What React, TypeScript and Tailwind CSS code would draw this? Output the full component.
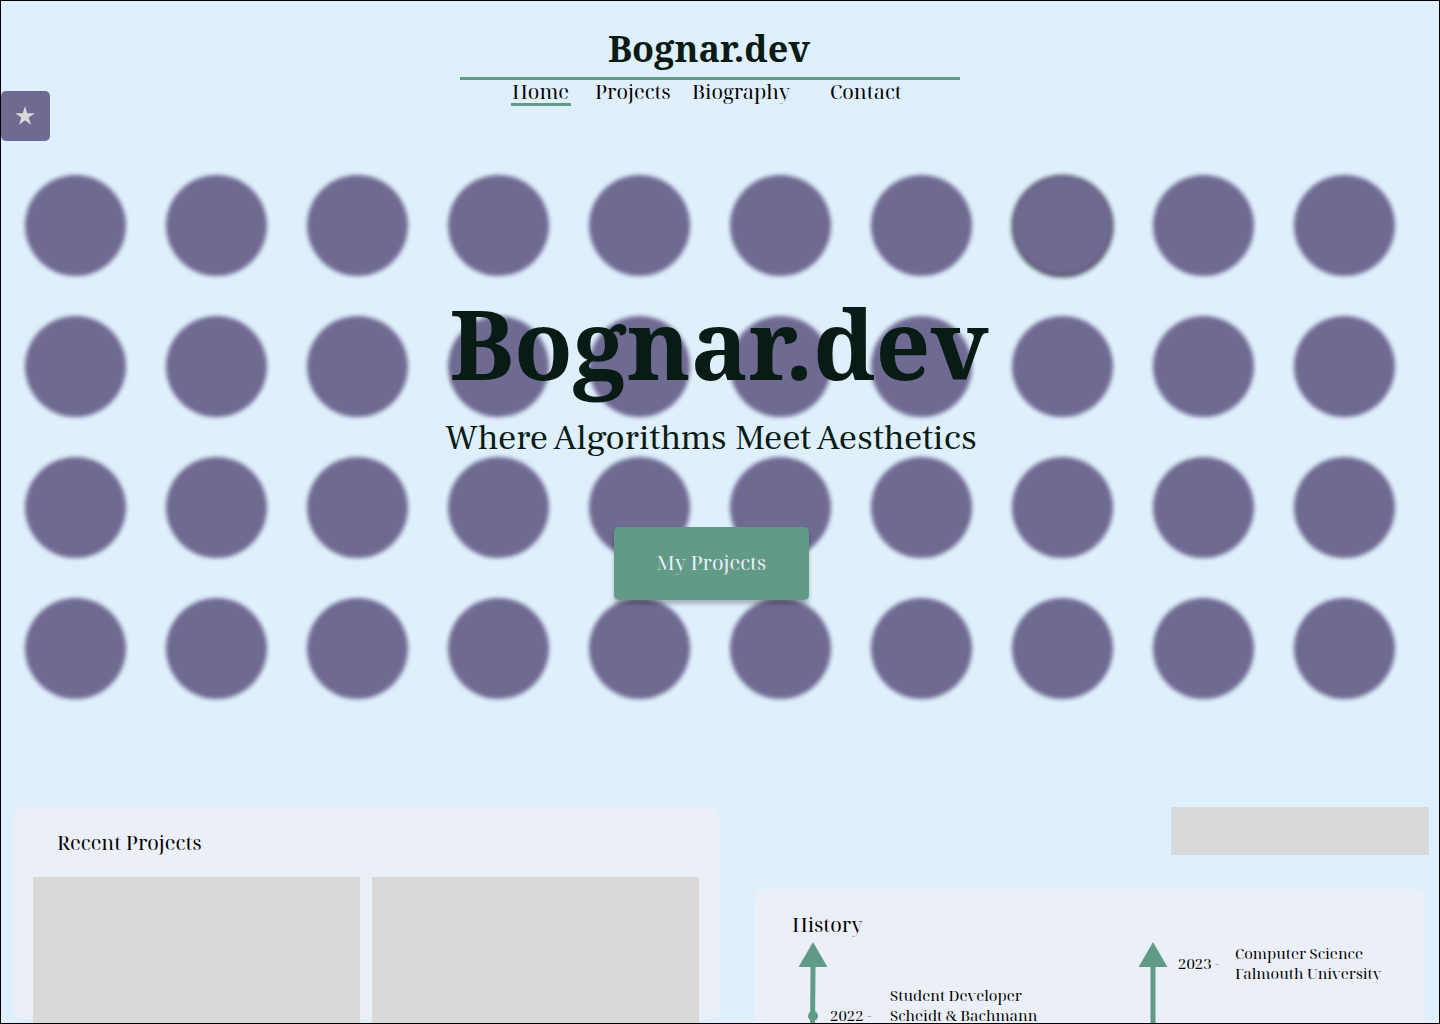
import React from "react";

const circles = Array.from({ length: 40 }, (_, i) => i);
const RAISED_CIRCLE = 7;

function StarTab() {
  return (
    <button
      type="button"
      aria-label="Favourites"
      className="absolute left-0 top-[90px] flex h-[50px] w-[49px] items-center justify-center rounded-[5px] bg-[#6f6a91] pb-px pr-px"
    >
      <svg width="20" height="19" viewBox="0 0 19 18" aria-hidden="true">
        <path
          d="M9.5 0 L11.6 6.8 H18.8 L13 11 L15.2 17.8 L9.5 13.6 L3.8 17.8 L6 11 L0.2 6.8 H7.4 Z"
          fill="#d9d9d9"
        />
      </svg>
    </button>
  );
}

function Header() {
  return (
    <header className="flex flex-col items-center pr-5 pt-6">
      <div className="w-[500px] max-w-full">
        <div className="border-b-[3px] border-[#619b87] pb-1 pr-[2px] text-center font-['Noto_Serif',serif] text-[36px] font-bold leading-[48px] text-[#081c15]">
          Bognar.dev
        </div>
        <nav className="grid grid-cols-[84px_97px_138px_auto] pl-[51px] text-[20px] leading-[23px] text-black">
          <a href="#home" className="w-[60px] border-b-[3px] border-[#619b87] pl-px">
            Home
          </a>
          <a href="#projects">Projects</a>
          <a href="#biography">Biography</a>
          <a href="#contact">Contact</a>
        </nav>
      </div>
    </header>
  );
}

function Hero() {
  return (
    <section id="home" className="mt-[69px] grid">
      <div className="col-start-1 row-start-1 grid grid-cols-10 justify-items-center gap-y-10 pl-1 pr-6">
        {circles.map((i) => (
          <div
            key={i}
            className={
              i === RAISED_CIRCLE
                ? "size-[101px] rounded-full bg-[#6f6a91] shadow-[inset_0_0_1px_1px_rgba(0,0,0,0.6),0_1px_2px_rgba(0,0,0,0.8)] blur-[2px]"
                : "size-[101px] rounded-full bg-[#6f6a91] blur-[2px]"
            }
          />
        ))}
      </div>
      <div className="z-10 col-start-1 row-start-1 flex flex-col items-center pt-[108px] text-[#081c15]">
        <h1 className="pr-[2px] font-['Noto_Serif',serif] text-[96px] font-bold leading-[120px]">Bognar.dev</h1>
        <p className="mt-3 pr-[18px] font-['Frank_Ruhl_Libre',serif] text-[36px] leading-[46px]">
          Where Algorithms Meet Aesthetics
        </p>
        <div className="mt-[66px] pr-[18px]">
          <button
            type="button"
            className="h-[73px] w-[195px] rounded-[5px] bg-[#619b87] pb-[2px] text-[20px] text-[#ebeff8] shadow-[0_4px_4px_rgba(0,0,0,0.25)]"
          >
            My Projects
          </button>
        </div>
      </div>
    </section>
  );
}

function Arrow({ dot }: { dot?: boolean }) {
  return (
    <svg width="28" height="160" viewBox="0 0 28 160" className="shrink-0 overflow-visible" aria-hidden="true">
      <path d="M14 0 L28.4 25 H-0.4 Z" fill="#619b87" />
      <path d={dot ? "M11.5 24 H16.5 L15.5 160 H10.5 Z" : "M11.5 24 H16.5 V160 H11.5 Z"} fill="#619b87" />
      {dot && <circle cx="14" cy="74" r="5" fill="#619b87" />}
    </svg>
  );
}

function RecentProjects() {
  return (
    <section id="projects" className="h-[212px] rounded-[10px] bg-[#ebeff8] pl-5 pr-[21px] pt-[22px]">
      <h2 className="pl-6 text-[20px] leading-[28px]">Recent Projects</h2>
      <div className="mt-5 grid grid-cols-2 gap-3">
        <div className="h-[240px] bg-[#d9d9d9]" />
        <div className="h-[240px] bg-[#d9d9d9]" />
      </div>
    </section>
  );
}

function History() {
  return (
    <section id="biography" className="rounded-[10px] bg-[#ebeff8] pl-[38px] pt-[22px]">
      <h2 className="text-[20px] leading-[28px]">History</h2>
      <div className="mt-[3px] grid grid-cols-[340px_auto] pl-[7px] text-[15px] leading-[20px]">
        <div className="flex gap-[3px]">
          <Arrow dot />
          <div className="flex items-end self-start pt-[43px]">
            <span className="w-[60px]">2022 -</span>
            <p>
              Student Developer
              <br />
              Scheidt &amp; Bachmann
            </p>
          </div>
        </div>
        <div className="flex gap-[11px]">
          <Arrow />
          <div className="flex items-center self-start pt-px">
            <span className="w-[57px]">2023 -</span>
            <p>
              Computer Science
              <br />
              Falmouth University
            </p>
          </div>
        </div>
      </div>
    </section>
  );
}

export default function App() {
  return (
    <div className="relative h-screen overflow-hidden border border-black bg-[#dfeffc] font-['Noto_Serif_Display','Liberation_Serif',serif] text-black">
      <StarTab />
      <Header />
      <main>
        <Hero />
        <div className="mt-[108px] grid grid-cols-[707fr_671fr] items-start gap-[34px] pl-3 pr-[14px]">
          <RecentProjects />
          <div className="flex flex-col gap-[34px]">
            <div className="-mr-1 h-12 w-[258px] self-end bg-[#d9d9d9]" />
            <History />
          </div>
        </div>
      </main>
    </div>
  );
}
